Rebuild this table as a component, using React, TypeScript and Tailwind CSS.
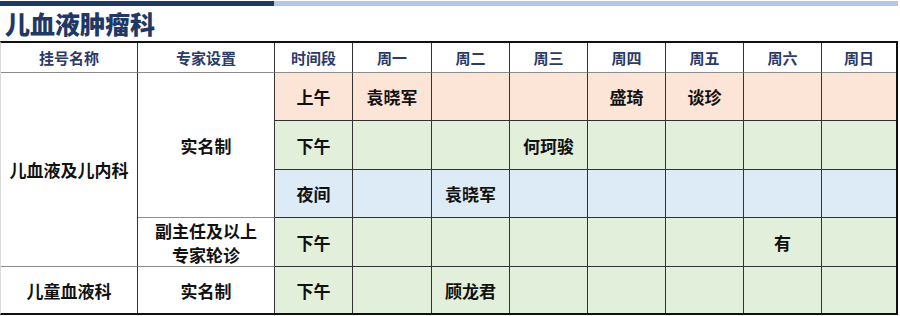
import React from "react";

const font = { fontFamily: '"Noto Sans CJK SC", "Noto Sans", sans-serif' };

const days = ["周一", "周二", "周三", "周四", "周五", "周六", "周日"];

const PEACH = "bg-[#fce4d6]";
const GREEN = "bg-[#e2efda]";
const BLUE = "bg-[#ddebf7]";

const rows: { period: string; bg: string; cells: string[]; rowClass: string }[] = [
  { period: "上午", bg: PEACH, cells: ["袁晓军", "", "", "盛琦", "谈珍", "", ""], rowClass: "row-start-2" },
  { period: "下午", bg: GREEN, cells: ["", "", "何珂骏", "", "", "", ""], rowClass: "row-start-3" },
  { period: "夜间", bg: BLUE, cells: ["", "袁晓军", "", "", "", "", ""], rowClass: "row-start-4" },
  { period: "下午", bg: GREEN, cells: ["", "", "", "", "", "有", ""], rowClass: "row-start-5" },
  { period: "下午", bg: GREEN, cells: ["", "顾龙君", "", "", "", "", ""], rowClass: "row-start-6" },
];

const dayCols = [
  "col-start-4",
  "col-start-5",
  "col-start-6",
  "col-start-7",
  "col-start-8",
  "col-start-9",
  "col-start-10",
];

export default function App() {
  return (
    <div className="w-[900px] h-[316px] bg-white overflow-hidden" style={font}>
      <div className="flex mt-[1px] h-[5px]">
        <div className="w-[274px] bg-[#203864]" />
        <div className="w-[624px] bg-[#b4c6e7]" />
      </div>
      <div className="h-[35px] flex items-center pl-[5px] text-[25px] font-black text-[#1f3864] leading-none">
        儿血液肿瘤科
      </div>
      <div className="w-[898px] border-t-2 border-b-2 border-t-[#111] border-b-[#111] border-l border-l-[#d9d9d9] border-r-2 border-r-[#111]">
        <div className="grid grid-cols-[137px_137px_78px_79px_78px_78px_78px_78px_78px_74px] grid-rows-[30px_48px_49px_48px_49px_46px] font-bold text-[17px] text-[#111] leading-none">
          {["挂号名称", "专家设置", "时间段", ...days].map((h, i) => (
            <div
              key={h}
              className={`row-start-1 flex items-center justify-center text-[15px] text-[#2b3a67] bg-white border-b border-b-[#8c8c8c] ${
                i < 9 ? "border-r border-r-[#333]" : ""
              }`}
            >
              {h}
            </div>
          ))}
          <div className="col-start-1 row-start-2 row-span-4 flex items-center justify-center border-r border-r-[#333] border-b border-b-[#8c8c8c]">
            儿血液及儿内科
          </div>
          <div className="col-start-1 row-start-6 flex items-center justify-center border-r border-r-[#333]">
            儿童血液科
          </div>
          <div className="col-start-2 row-start-2 row-span-3 flex items-center justify-center border-r border-r-[#333] border-b border-b-[#8c8c8c]">
            实名制
          </div>
          <div className="col-start-2 row-start-5 flex flex-col items-center justify-center gap-[7px] border-r border-r-[#333] border-b border-b-[#8c8c8c]">
            <span>副主任及以上</span>
            <span>专家轮诊</span>
          </div>
          <div className="col-start-2 row-start-6 flex items-center justify-center border-r border-r-[#333]">
            实名制
          </div>
          {rows.map((r, ri) => (
            <React.Fragment key={ri}>
              <div
                className={`${r.rowClass} col-start-3 ${r.bg} flex items-center justify-center border-r border-r-[#333] ${
                  ri < 4 ? "border-b border-b-[#333]" : ""
                }`}
              >
                {r.period}
              </div>
              {r.cells.map((c, ci) => (
                <div
                  key={ci}
                  className={`${r.rowClass} ${dayCols[ci]} ${r.bg} flex items-center justify-center ${
                    ci < 6 ? "border-r border-r-[#333]" : ""
                  } ${ri < 4 ? "border-b border-b-[#333]" : ""}`}
                >
                  {c}
                </div>
              ))}
            </React.Fragment>
          ))}
        </div>
      </div>
    </div>
  );
}
